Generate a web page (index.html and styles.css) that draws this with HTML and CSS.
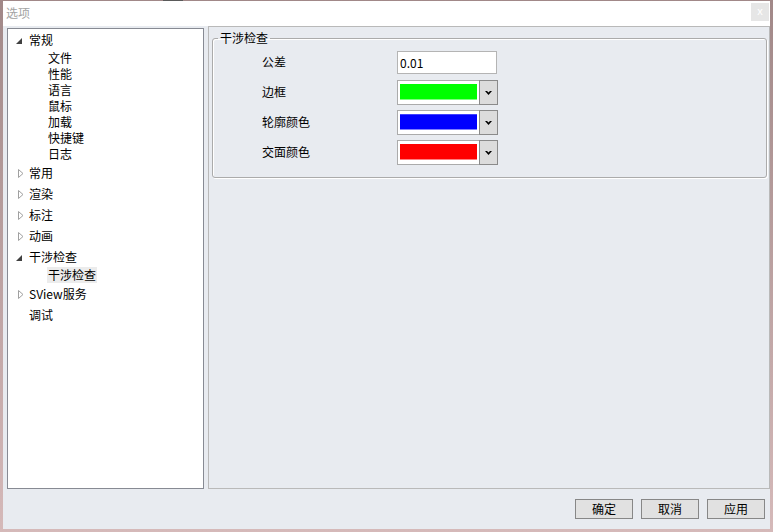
FILE: index.html
```html
<!DOCTYPE html>
<html lang="zh">
<head>
<meta charset="utf-8">
<title>选项</title>
<link rel="stylesheet" href="styles.css">
</head>
<body>
<span class="desk-mark"></span>
<div class="window">
  <div class="titlebar">
    <span class="title">选项</span>
    <span class="close">x</span>
  </div>
  <div class="main">
    <div class="content">
      <div class="tree">
        <div class="node parent"><span class="arrow"><svg width="6" height="6" viewBox="0 0 6 6"><polygon points="6,0 6,6 0,6" fill="#404040"/></svg></span><span class="label">常规</span></div>
        <div class="node child"><span class="label">文件</span></div>
        <div class="node child"><span class="label">性能</span></div>
        <div class="node child"><span class="label">语言</span></div>
        <div class="node child"><span class="label">鼠标</span></div>
        <div class="node child"><span class="label">加载</span></div>
        <div class="node child"><span class="label">快捷键</span></div>
        <div class="node child"><span class="label">日志</span></div>
        <div class="node parent"><span class="arrow closed"><svg width="6" height="9" viewBox="0 0 6 9"><polygon points="0.5,0.5 5,4.5 0.5,8.5" fill="#fff" stroke="#a0a0a0"/></svg></span><span class="label">常用</span></div>
        <div class="node parent"><span class="arrow closed"><svg width="6" height="9" viewBox="0 0 6 9"><polygon points="0.5,0.5 5,4.5 0.5,8.5" fill="#fff" stroke="#a0a0a0"/></svg></span><span class="label">渲染</span></div>
        <div class="node parent"><span class="arrow closed"><svg width="6" height="9" viewBox="0 0 6 9"><polygon points="0.5,0.5 5,4.5 0.5,8.5" fill="#fff" stroke="#a0a0a0"/></svg></span><span class="label">标注</span></div>
        <div class="node parent"><span class="arrow closed"><svg width="6" height="9" viewBox="0 0 6 9"><polygon points="0.5,0.5 5,4.5 0.5,8.5" fill="#fff" stroke="#a0a0a0"/></svg></span><span class="label">动画</span></div>
        <div class="node parent"><span class="arrow"><svg width="6" height="6" viewBox="0 0 6 6"><polygon points="6,0 6,6 0,6" fill="#404040"/></svg></span><span class="label">干涉检查</span></div>
        <div class="node child"><span class="label selected">干涉检查</span></div>
        <div class="node parent"><span class="arrow closed"><svg width="6" height="9" viewBox="0 0 6 9"><polygon points="0.5,0.5 5,4.5 0.5,8.5" fill="#fff" stroke="#a0a0a0"/></svg></span><span class="label">SView服务</span></div>
        <div class="node parent"><span class="arrow"></span><span class="label">调试</span></div>
      </div>
      <div class="panel">
        <fieldset class="group">
          <legend>干涉检查</legend>
          <div class="form">
            <span class="flabel">公差</span>
            <input class="textbox" type="text" value="0.01">
            <span class="flabel">边框</span>
            <div class="combo">
              <div class="field"><span class="swatch green"></span></div>
              <div class="drop"><svg width="7" height="4" viewBox="0 0 7 4"><polygon points="0,0 2,0 3.5,1.6 5,0 7,0 3.5,4" fill="#000"/></svg></div>
            </div>
            <span class="flabel">轮廓颜色</span>
            <div class="combo">
              <div class="field"><span class="swatch blue"></span></div>
              <div class="drop"><svg width="7" height="4" viewBox="0 0 7 4"><polygon points="0,0 2,0 3.5,1.6 5,0 7,0 3.5,4" fill="#000"/></svg></div>
            </div>
            <span class="flabel">交面颜色</span>
            <div class="combo">
              <div class="field"><span class="swatch red"></span></div>
              <div class="drop"><svg width="7" height="4" viewBox="0 0 7 4"><polygon points="0,0 2,0 3.5,1.6 5,0 7,0 3.5,4" fill="#000"/></svg></div>
            </div>
          </div>
        </fieldset>
      </div>
    </div>
    <div class="buttons">
      <button class="btn">确定</button>
      <button class="btn">取消</button>
      <button class="btn">应用</button>
    </div>
  </div>
</div>
</body>
</html>
```

FILE: styles.css
```css
* { box-sizing: border-box; }
html, body { margin: 0; padding: 0; }
body {
  width: 773px;
  height: 532px;
  padding: 1px 3px 3px 3px;
  background: linear-gradient(to bottom, #a18888, #d5b9b9);
  font-family: "Noto Sans CJK SC", "Noto Sans", sans-serif;
  font-size: 12px;
  color: #000;
  position: relative;
  overflow: hidden;
}
.desk-mark {
  position: absolute;
  left: 163px;
  top: 0;
  width: 20px;
  height: 1px;
  background: #5a5a5a;
}
.window {
  width: 767px;
  height: 528px;
  display: flex;
  flex-direction: column;
  background: #e8ebf0;
}
.titlebar {
  height: 25px;
  background: #fff;
  display: flex;
  align-items: flex-start;
  justify-content: space-between;
  padding: 0 1px 0 3px;
}
.title {
  color: #a3a3a3;
  font-size: 12px;
  line-height: 16px;
  margin-top: 4px;
}
.close {
  width: 18px;
  height: 18px;
  margin-top: 2px;
  background: #e6e6e6;
  color: #fff;
  font-family: "Liberation Sans", sans-serif;
  font-size: 11px;
  line-height: 17px;
  text-align: center;
}
.main {
  flex: 1;
  display: flex;
  flex-direction: column;
}
.content {
  display: flex;
  gap: 4px;
  padding-left: 4px;
  height: 463px;
}
.tree {
  width: 197px;
  height: 461px;
  margin-top: 2px;
  background: #fff;
  border: 1px solid #878a93;
}
.node {
  display: flex;
  align-items: flex-start;
  line-height: 16px;
  white-space: nowrap;
}
.node.parent {
  height: 21px;
  padding: 3px 0 0 8px;
}
.node.child {
  height: 16px;
  padding-left: 40px;
}
.arrow {
  width: 13px;
  height: 16px;
  display: flex;
  align-items: center;
}
.arrow svg { display: block; margin-top: 2px; }
.arrow.closed svg { margin-left: 2px; margin-top: 0; }
.label.selected {
  background: #ececec;
  padding: 0 1px;
  margin-left: -1px;
}
.panel {
  flex: 1;
  height: 463px;
  border: 1px solid #b9b9b9;
  background: #e8ebf0;
  padding: 3px 2px 0 3px;
}
.group {
  margin: 0;
  min-width: 0;
  border: 1px solid #ababab;
  border-radius: 3px;
  box-shadow: 1px 1px 0 #fff, inset 1px 1px 0 #fff;
  padding: 1px 5px 10px 5px;
}
.group legend {
  padding: 0 2px;
  line-height: 16px;
  font-size: 12px;
}
.form {
  display: grid;
  grid-template-columns: 135px 101px;
  grid-auto-rows: 30px;
  align-items: center;
  margin-left: 44px;
}
.flabel { line-height: 16px; }
.textbox {
  width: 100px;
  height: 23px;
  border: 1px solid #b4b4b4;
  background: #fff;
  padding: 0 2px;
  font-family: "Noto Sans CJK SC", "Noto Sans", sans-serif;
  font-size: 12px;
  color: #000;
  outline: none;
}
.combo {
  display: flex;
  width: 101px;
  height: 25px;
}
.field {
  width: 82px;
  height: 25px;
  background: #fff;
  border: 1px solid #ababab;
  border-right: none;
  padding: 3px 0 0 2px;
}
.swatch {
  display: block;
  width: 77px;
  height: 16px;
  box-shadow: inset 0 -1px 0 rgba(255,255,255,0.5);
}
.swatch.green { background: #00ff00; }
.swatch.blue { background: #0000ff; box-shadow: inset 0 -1px 0 rgba(255,255,255,0.5), inset 0 1px 0 rgba(255,255,255,0.25); }
.swatch.red { background: #ff0000; }
.drop {
  width: 19px;
  height: 25px;
  background: #dcdcdc;
  border: 1px solid #8a8a8a;
  display: flex;
  align-items: center;
  justify-content: center;
  padding-top: 1px;
}
.drop svg { display: block; }
.buttons {
  display: flex;
  justify-content: flex-end;
  gap: 8px;
  padding: 10px 5px 0 0;
}
.btn {
  width: 58px;
  height: 20px;
  background: #e1e1e1;
  border: 1px solid #878787;
  border-radius: 0;
  font-family: "Noto Sans CJK SC", "Noto Sans", sans-serif;
  font-size: 12px;
  line-height: 16px;
  color: #000;
  padding: 0;
}
```
